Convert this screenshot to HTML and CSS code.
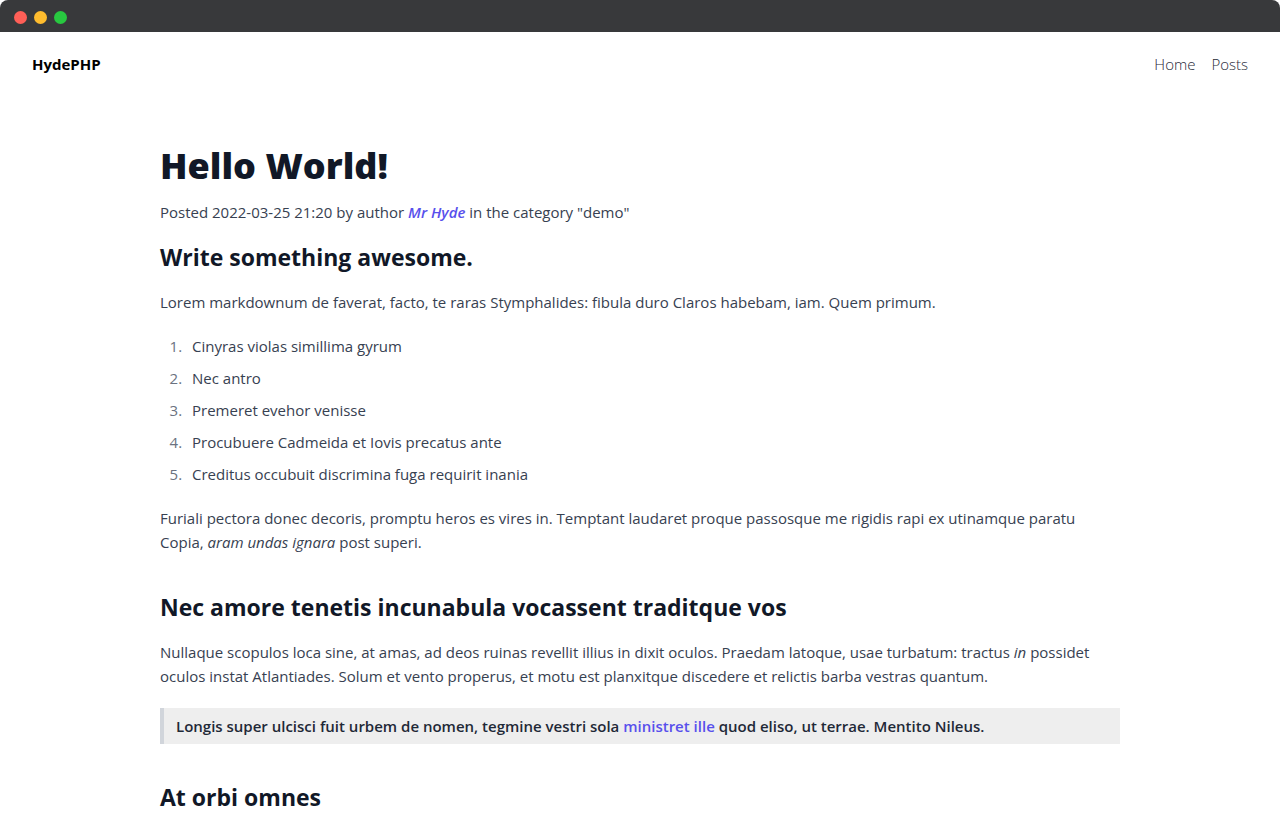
FILE: index.html
```
<!DOCTYPE html>
<html lang="en">
<head>
<meta charset="utf-8">
<title>HydePHP - Hello World!</title>
<link rel="stylesheet" href="styles.css">
</head>
<body>
<div class="titlebar">
  <span class="dot dot-close"></span>
  <span class="dot dot-minimize"></span>
  <span class="dot dot-zoom"></span>
</div>
<header class="site-header">
  <a class="brand" href="#">HydePHP</a>
  <nav class="site-nav">
    <a href="#">Home</a>
    <a href="#">Posts</a>
  </nav>
</header>
<main class="post">
  <h1>Hello World!</h1>
  <p class="byline">Posted 2022-03-25 21:20 by author <a class="author" href="#">Mr Hyde</a> in the category "demo"</p>
  <h2 class="lead-heading">Write something awesome.</h2>
  <p>Lorem markdownum de faverat, facto, te raras Stymphalides: fibula duro Claros habebam, iam. Quem primum.</p>
  <ol>
    <li>Cinyras violas simillima gyrum</li>
    <li>Nec antro</li>
    <li>Premeret evehor venisse</li>
    <li>Procubuere Cadmeida et Iovis precatus ante</li>
    <li>Creditus occubuit discrimina fuga requirit inania</li>
  </ol>
  <p>Furiali pectora donec decoris, promptu heros es vires in. Temptant laudaret proque passosque me rigidis rapi ex utinamque paratu Copia, <em>aram undas ignara</em> post superi.</p>
  <h2>Nec amore tenetis incunabula vocassent traditque vos</h2>
  <p>Nullaque scopulos loca sine, at amas, ad deos ruinas revellit illius in dixit oculos. Praedam latoque, usae turbatum: tractus <em>in</em> possidet oculos instat Atlantiades. Solum et vento properus, et motu est planxitque discedere et relictis barba vestras quantum.</p>
  <blockquote>Longis super ulcisci fuit urbem de nomen, tegmine vestri sola <a href="#">ministret ille</a> quod eliso, ut terrae. Mentito Nileus.</blockquote>
  <h2>At orbi omnes</h2>
</main>
</body>
</html>
```
FILE: styles.css
```
* { box-sizing: border-box; }
body {
  margin: 0;
  background: #fff;
  color: #374151;
  font: 15px/24px "Open Sans", "Noto Sans", sans-serif;
}
a { text-decoration: none; }
.titlebar {
  display: flex;
  align-items: center;
  gap: 7px;
  height: 32px;
  padding: 2px 14px 0;
  background: #38393b;
  border-radius: 8px 8px 0 0;
}
.dot { width: 13px; height: 13px; border-radius: 50%; }
.dot-close { background: #ff5f57; }
.dot-minimize { background: #febc2e; }
.dot-zoom { background: #28c840; }
.site-header {
  display: flex;
  justify-content: space-between;
  align-items: center;
  padding: 20px 32px;
}
.brand { color: #000; font-weight: 700; }
.site-nav { display: flex; gap: 16px; }
.site-nav a { color: #1f2937; font-weight: 300; }
.post {
  max-width: 1024px;
  margin: 0 auto;
  padding: 50px 32px 0;
}
h1 {
  margin: 0 0 14px;
  color: #111827;
  font-size: 36px;
  line-height: 40px;
  font-weight: 800;
}
h2 {
  margin: 36px 0 16px;
  color: #111827;
  font-size: 23px;
  line-height: 34px;
  font-weight: 700;
}
.post p { margin: 0 0 20px; }
.post .byline { margin: 0; }
.post .lead-heading { margin-top: 16px; }
.author { color: #5850ec; font-style: italic; font-weight: 600; }
ol { margin: 0 0 20px; padding-left: 26px; }
li { margin-bottom: 8px; padding-left: 6px; }
li::marker { color: #6b7280; }
blockquote {
  margin: 0;
  padding: 6px 12px;
  border-left: 4px solid #d1d5db;
  background: #eee;
  color: #1f2937;
  font-weight: 600;
}
blockquote a { color: #5850ec; }
```
